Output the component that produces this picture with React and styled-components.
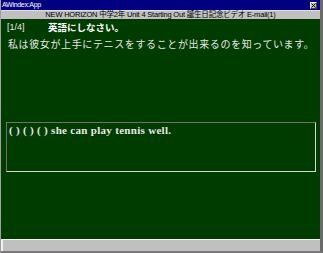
import React from "react";
import styled, { createGlobalStyle } from "styled-components";

const Global = createGlobalStyle`
  html, body { margin: 0; padding: 0; background: #c0c0c0; }
  body { width: 323px; height: 253px; overflow: hidden; }
`;

const Frame = styled.div`
  width: 323px;
  height: 253px;
  box-sizing: border-box;
  display: flex;
  flex-direction: column;
  background: #c0c0c0;
  border-left: 1px solid #a0a0a0;
  border-right: 3px solid #6a6a6a;
  border-bottom: 2px solid #7a7a7a;
`;

const TitleBar = styled.div`
  height: 10px;
  flex: none;
  background: #000080;
  display: flex;
  align-items: center;
  justify-content: space-between;
  padding: 0 3px 0 1px;
  color: #fff;
  font-family: "Liberation Sans", Arial, sans-serif;
  font-size: 7px;
  line-height: 10px;
  letter-spacing: -0.3px;
`;

const CloseBox = styled.div`
  width: 7px;
  height: 7px;
  background: #c0c0c0;
  border: 1px solid #fff;
  border-right-color: #404040;
  border-bottom-color: #404040;
  box-sizing: border-box;
  display: flex;
  align-items: center;
  justify-content: center;
  svg { display: block; }
`;

const Header = styled.div`
  height: 9px;
  flex: none;
  background: #c0c0c0;
  border-top: 1px solid #e0e0e0;
  box-sizing: border-box;
  display: flex;
  align-items: center;
  justify-content: center;
  color: #000;
  font-family: "Liberation Sans", "Noto Sans CJK JP", sans-serif;
  font-size: 7.5px;
  line-height: 8px;
  letter-spacing: -0.2px;
  white-space: nowrap;
  overflow: visible;
`;

const Board = styled.div`
  flex: 1;
  background: #003c00;
  display: flex;
  flex-direction: column;
  padding: 3px 0 0 0;
  color: #e6e6e6;
`;

const TopRow = styled.div`
  display: flex;
  align-items: center;
  height: 10px;
  padding-left: 6px;
  font-family: "Liberation Sans", "Noto Sans CJK JP", sans-serif;
  font-size: 9px;
`;

const Count = styled.span`
  width: 41px;
`;

const Prompt = styled.span`
  color: #fff;
  font-weight: 600;
  font-size: 9.5px;
`;

const Question = styled.div`
  margin-top: 5px;
  padding-left: 7px;
  font-family: "Noto Sans CJK JP", sans-serif;
  font-size: 10px;
  letter-spacing: 0.62px;
  line-height: 14px;
  white-space: nowrap;
`;

const AnswerBox = styled.div`
  margin: 71px 0 0 5px;
  width: 310px;
  height: 50px;
  box-sizing: border-box;
  border: 1px solid #707070;
  border-right-color: #d8d8d8;
  border-bottom-color: #d8d8d8;
  padding: 1px 0 0 2px;
  font-family: "Liberation Serif", "Times New Roman", serif;
  font-weight: bold;
  font-size: 11px;
  letter-spacing: 0.3px;
  color: #e8e8e8;
  white-space: nowrap;
`;

const Footer = styled.div`
  height: 11px;
  flex: none;
  background: #c0c0c0;
  border-top: 1px solid #f4f4f4;
  border-left: 2px solid #f0f0f0;
`;

export default function App() {
  return (
    <>
      <Global />
      <Frame>
        <TitleBar>
          <span>AWindex:App</span>
          <CloseBox>
            <svg width="5" height="5" viewBox="0 0 5 5">
              <path d="M0.5 0.5 L4.5 4.5 M4.5 0.5 L0.5 4.5" stroke="#000" strokeWidth="1" />
            </svg>
          </CloseBox>
        </TitleBar>
        <Header>NEW HORIZON 中学2年 Unit 4 Starting Out 誕生日記念ビデオ E-mail(1)</Header>
        <Board>
          <TopRow>
            <Count>[1/4]</Count>
            <Prompt>英語にしなさい。</Prompt>
          </TopRow>
          <Question>私は彼女が上手にテニスをすることが出来るのを知っています。</Question>
          <AnswerBox>( ) ( ) ( ) she can play tennis well.</AnswerBox>
        </Board>
        <Footer />
      </Frame>
    </>
  );
}
